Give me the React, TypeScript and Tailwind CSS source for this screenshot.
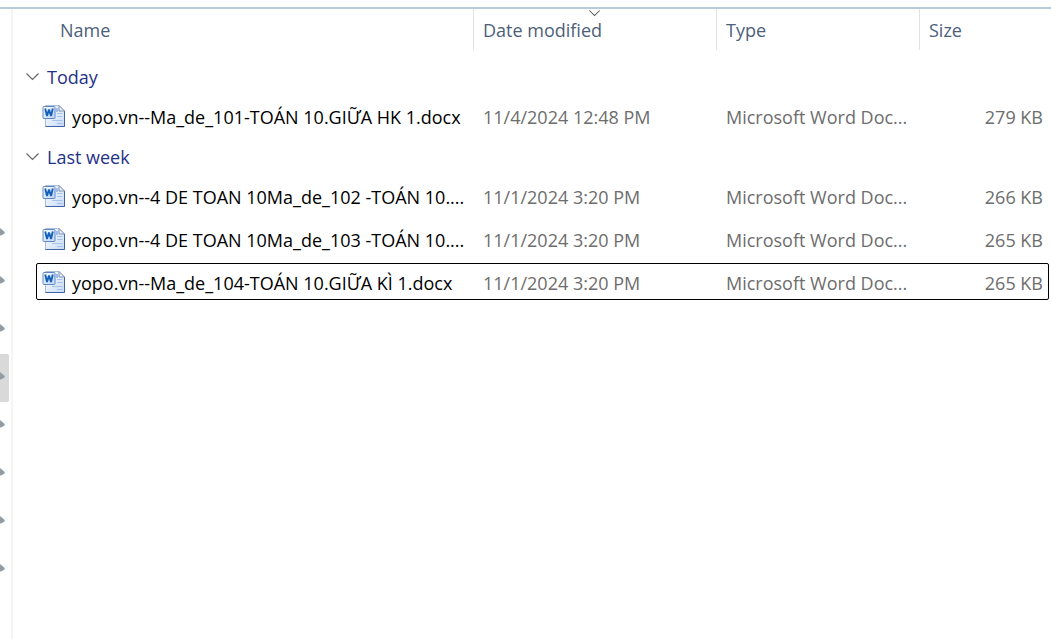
import { useState } from 'react'

type FileItem = {
  name: string
  date: string
  type: string
  size: string
  focused?: boolean
}

const groups: { label: string; files: FileItem[] }[] = [
  {
    label: 'Today',
    files: [
      { name: 'yopo.vn--Ma_de_101-TOÁN 10.GIỮA HK 1.docx', date: '11/4/2024 12:48 PM', type: 'Microsoft Word Doc...', size: '279 KB' },
    ],
  },
  {
    label: 'Last week',
    files: [
      { name: 'yopo.vn--4 DE TOAN 10Ma_de_102 -TOÁN 10....', date: '11/1/2024 3:20 PM', type: 'Microsoft Word Doc...', size: '266 KB' },
      { name: 'yopo.vn--4 DE TOAN 10Ma_de_103 -TOÁN 10....', date: '11/1/2024 3:20 PM', type: 'Microsoft Word Doc...', size: '265 KB' },
      { name: 'yopo.vn--Ma_de_104-TOÁN 10.GIỮA KÌ 1.docx', date: '11/1/2024 3:20 PM', type: 'Microsoft Word Doc...', size: '265 KB', focused: true },
    ],
  },
]

const pins = [0, 1, 2, 3, 4, 5, 6, 7]

function Chevron({ className }: { className: string }) {
  return (
    <svg className={className} viewBox="0 0 14 8" fill="none" stroke="currentColor" aria-hidden="true">
      <path d="M.5.5l6 6 6-6" strokeWidth="1.2" />
    </svg>
  )
}

function WordIcon() {
  return (
    <svg className="w-6 h-6 shrink-0" viewBox="0 1 24 24" aria-hidden="true">
      <defs>
        <linearGradient id="page" x1="0" y1="0" x2="1" y2="1">
          <stop offset="0" stopColor="#ffffff" />
          <stop offset="1" stopColor="#c6daf4" />
        </linearGradient>
        <linearGradient id="tile" x1="0" y1="0" x2="1" y2="1">
          <stop offset="0" stopColor="#ffffff" />
          <stop offset="1" stopColor="#bcd5f5" />
        </linearGradient>
      </defs>
      <path d="M3.500 1.500h13.500l5.500 5.500v15.500h-19z" fill="url(#page)" stroke="#a9bedb" />
      <path d="M3.500 22.500h19V7" fill="none" stroke="#3f639f" />
      <path d="M17 1.500V7h5.500z" fill="#e6edf6" stroke="#8094b4" />
      <path d="M15 9.500h5.500M15 12.500h5.500M10 16.500h10.500M15 19.500h5.500" stroke="#a6c2e8" />
      <path d="M14 4h2v4h-2z" fill="#9dbdea" />
      <rect x="1" y="2.500" width="12" height="12" rx="1" fill="url(#tile)" stroke="#5f87c6" />
      <path d="M3.200 4.500l1.800 7.500L7 5.500 9 12l1.800-7.500" fill="none" stroke="#1560bd" strokeWidth="1.900" strokeLinejoin="bevel" />
    </svg>
  )
}

function FileRow({ file }: { file: FileItem }) {
  return (
    <tr className="relative h-[43px] text-[#6d6d6d]">
      <td className="pl-[29px] text-black">
        {file.focused && <div className="absolute left-[23px] right-[2px] top-[2px] bottom-1 border border-black rounded-xs" />}
        <div className="flex items-center gap-[6px]">
          <WordIcon />
          <span>{file.name}</span>
        </div>
      </td>
      <td className="pl-[10px]">{file.date}</td>
      <td className="pl-[10px]">{file.type}</td>
      <td className="pr-2 text-right">{file.size}</td>
    </tr>
  )
}

function FileGroup({ label, files }: { label: string; files: FileItem[] }) {
  const [open, setOpen] = useState(true)
  return (
    <tbody>
      <tr className="h-[37px]">
        <th colSpan={4} scope="rowgroup" className="pl-[13px] text-left font-normal">
          <button className="flex items-center gap-[7px] text-[#1e3287] cursor-pointer" aria-expanded={open} onClick={() => setOpen(!open)}>
            <Chevron className={`w-[14px] h-2 text-[#666] ${open ? '' : '-rotate-90'}`} />
            {label}
          </button>
        </th>
      </tr>
      {open && files.map((file) => <FileRow key={file.name} file={file} />)}
    </tbody>
  )
}

export default function App() {
  return (
    <div className="min-h-screen flex flex-col bg-white pt-[7px] font-['Open_Sans','Noto_Sans',sans-serif] text-[18px] leading-6">
      <div className="grow flex border-t-2 border-[#b9cad9]">
        <aside className="w-[13px] shrink-0 border-r-2 border-[#f5f5f5] pt-[201px]">
          {pins.map((pin) => (
            <div key={pin} className={`h-12 w-[9px] flex items-center rounded-r-xs ${pin === 3 ? 'bg-[#d9d9d9]' : ''}`}>
              <svg className="w-[5px] h-3" viewBox="0 0 5 12" aria-hidden="true">
                <path d="M0 0l4.700 4v1.200L3 6.600 0 7.800z" fill="#929ca3" />
              </svg>
            </div>
          ))}
        </aside>
        <main className="grow min-w-0">
          <table className="w-full table-fixed whitespace-nowrap">
            <colgroup>
              <col />
              <col className="w-[243px]" />
              <col className="w-[203px]" />
              <col className="w-[132px]" />
            </colgroup>
            <thead className="text-[#4c607a]">
              <tr className="h-[49px] align-top text-left">
                <th scope="col" className="font-normal">
                  <div className="h-[41px] flex items-center pl-[47px]">Name</div>
                </th>
                <th scope="col" className="relative font-normal" aria-sort="descending">
                  <Chevron className="absolute top-px left-1/2 -translate-x-1/2 w-3 h-[7px] text-[#555]" />
                  <div className="h-[41px] flex items-center border-l border-[#e2e2e2] pl-[9px]">Date modified</div>
                </th>
                <th scope="col" className="font-normal">
                  <div className="h-[41px] flex items-center border-l border-[#e2e2e2] pl-[9px]">Type</div>
                </th>
                <th scope="col" className="font-normal">
                  <div className="h-[41px] flex items-center border-l border-[#e2e2e2] pl-[9px]">Size</div>
                </th>
              </tr>
            </thead>
            {groups.map((group) => (
              <FileGroup key={group.label} label={group.label} files={group.files} />
            ))}
          </table>
        </main>
      </div>
    </div>
  )
}
